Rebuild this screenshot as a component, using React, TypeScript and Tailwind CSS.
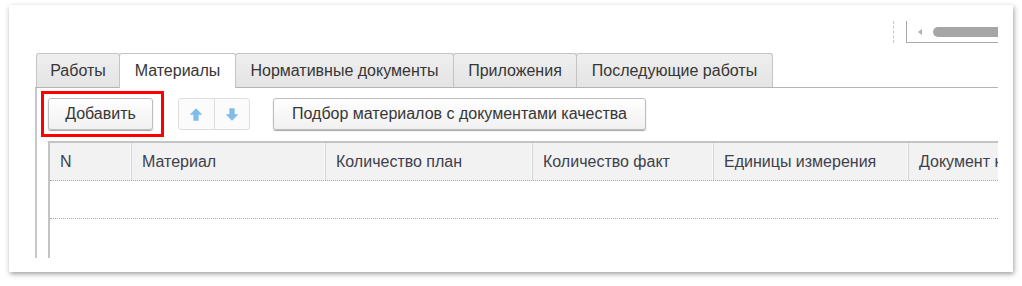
import React from "react";

const font = { fontFamily: '"Liberation Sans", Arial, sans-serif' };

function Arrow({ dir }: { dir: "up" | "down" }) {
  return (
    <svg width="14" height="15" viewBox="0 0 12 13">
      <path
        d={dir === "up" ? "M6 1 L11.5 6.8 H8.3 V12 H3.7 V6.8 H0.5 Z" : "M6 12 L11.5 6.2 H8.3 V1 H3.7 V6.2 H0.5 Z"}
        fill="#80bdea"
      />
    </svg>
  );
}

const tabs: { label: string; w: string }[] = [
  { label: "Работы", w: "w-[84px]" },
  { label: "Материалы", w: "w-[117px]" },
  { label: "Нормативные документы", w: "w-[219px]" },
  { label: "Приложения", w: "w-[124px]" },
  { label: "Последующие работы", w: "w-[197px]" },
];

const cols: { label: string; w: string }[] = [
  { label: "N", w: "w-[82px]" },
  { label: "Материал", w: "w-[194px]" },
  { label: "Количество план", w: "w-[207px]" },
  { label: "Количество факт", w: "w-[181px]" },
  { label: "Единицы измерения", w: "w-[195px]" },
  { label: "Документ качества", w: "w-[200px]" },
];

export default function App() {
  return (
    <div className="w-[1022px] h-[286px] bg-white pt-[5px] pl-[9px]" style={font}>
      <div className="w-[1004px] h-[267px] bg-white shadow-[1px_2px_5px_rgba(0,0,0,0.38)] flex flex-col">
        <div className="ml-[26px] mr-[15px] overflow-hidden flex flex-col">
          {/* top area with scroll */}
          <div className="h-[49px] flex justify-end items-start pt-[16px]">
            <div className="w-px h-[22px] border-l border-dashed border-[#c8c8c8] mr-[12px]" />
            <div className="w-[92px] h-[22px] border-l border-b border-[#a8a8a8] flex items-center pl-[11px]">
              <div className="w-0 h-0 border-y-[3px] border-y-transparent border-r-[4px] border-r-[#b0b0b0] mr-[11px]" />
              <div className="flex-1 h-[10px] rounded-l-full bg-[#a6a6a6]" />
            </div>
          </div>
          {/* tabs */}
          <div className="flex items-end border-b border-[#b4b4b4] pl-px h-[34px]">
            {tabs.map((t, i) => (
              <div
                key={t.label}
                className={
                  t.w +
                  (i === 1
                    ? " h-[35px] -mb-px -ml-px flex items-center justify-center bg-white border border-b-0 border-[#c4c4c4] rounded-t-[3px] text-[16px] text-[#363636]"
                    : " h-[34px] flex items-center justify-center bg-gradient-to-b from-[#efefef] to-[#e4e4e4] border border-[#c4c4c4] border-b-0 rounded-t-[3px] text-[16px] text-[#363636]" +
                      (i === 0 ? "" : " -ml-px"))
                }
              >
                {t.label}
              </div>
            ))}
          </div>
          {/* panel */}
          <div className="h-[170px] border-l-2 border-[#c8c8c8] flex flex-col pt-[3px]">
            <div className="flex items-center pl-[4px] h-[46px]">
              <div className="border-[3px] border-[#ff0000] pl-[4px] pr-[8px] py-[4px]">
                <div className="h-[32px] w-[105px] flex items-center justify-center rounded-[3px] border border-[#bdbdbd] bg-gradient-to-b from-white to-[#f1f1f1] shadow-[0_1px_1px_rgba(0,0,0,0.35)] text-[16px] text-[#363636]">
                  Добавить
                </div>
              </div>
              <div className="ml-[14px] h-[32px] w-[72px] flex rounded-[3px] border border-[#dedede] bg-[#fbfbfb]">
                <div className="flex-1 flex items-center justify-center border-r border-[#dedede]">
                  <Arrow dir="up" />
                </div>
                <div className="flex-1 flex items-center justify-center">
                  <Arrow dir="down" />
                </div>
              </div>
              <div className="ml-[23px] h-[32px] w-[373px] flex items-center justify-center rounded-[3px] border border-[#bdbdbd] bg-gradient-to-b from-white to-[#f1f1f1] shadow-[0_1px_1px_rgba(0,0,0,0.35)] text-[16px] text-[#363636] whitespace-nowrap">
                Подбор материалов с документами качества
              </div>
            </div>
            {/* grid */}
            <div className="mt-[4px] ml-[11px] flex-1 border-l-2 border-t-2 border-[#c4c4c4] flex flex-col">
              <div className="h-[38px] flex bg-[#f2f2f2] border-b border-dotted border-[#a8a8a8] shrink-0">
                {cols.map((c) => (
                  <div
                    key={c.label}
                    className={c.w + " shrink-0 h-full flex items-center pl-[10px] border-r border-[#d6d6d6] shadow-[inset_-1px_0_0_#fafafa] text-[16px] text-[#40404c] whitespace-nowrap"}
                  >
                    {c.label}
                  </div>
                ))}
              </div>
              <div className="h-[38px] border-b border-dotted border-[#a8a8a8] shrink-0" />
            </div>
          </div>
        </div>
      </div>
    </div>
  );
}
